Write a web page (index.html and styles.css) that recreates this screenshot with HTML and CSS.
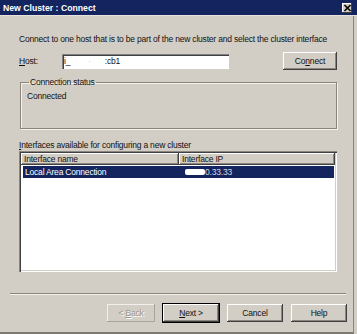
FILE: index.html
```html
<!DOCTYPE html>
<html lang="en">
<head>
    <meta charset="UTF-8">
    <title>New Cluster : Connect</title>
    <link rel="stylesheet" href="styles.css">
</head>
<body>
    <div class="titlebar">
        <span class="title">New Cluster : Connect</span>
        <span class="close">
            <svg width="9" height="8" viewBox="0 0 9 8"><path d="M1.5 1 L7.5 7 M7.5 1 L1.5 7" stroke="#000" stroke-width="1.6"/></svg>
        </span>
    </div>
    <div class="window">
        <div class="content">
            <p class="intro">Connect to one host that is to be part of the new cluster and select the cluster interface</p>

            <div class="host-row">
                <span class="host-label"><u>H</u>ost:</span>
                <div class="textbox"><span>i_</span><span class="hidden-part">·</span><span class="host-end">:cb1</span></div>
                <button class="btn btn-connect">Co<u>n</u>nect</button>
            </div>

            <fieldset class="group">
                <legend>Connection status</legend>
                <div class="status">Connected</div>
            </fieldset>

            <div class="list-label"><u>I</u>nterfaces available for configuring a new cluster</div>
            <div class="listview">
                <div class="list-header">
                    <div class="col col-name">Interface name</div>
                    <div class="col col-ip">Interface IP</div>
                </div>
                <div class="list-row selected">
                    <div class="cell cell-name">Local Area Connection</div>
                    <div class="cell cell-ip"><span class="smudge"></span>0.33.33</div>
                </div>
            </div>
        </div>

        <div class="separator"></div>

        <div class="footer">
            <button class="btn btn-back" disabled>&lt; <u>B</u>ack</button>
            <button class="btn btn-default"><u>N</u>ext &gt;</button>
            <button class="btn">Cancel</button>
            <button class="btn">Help</button>
        </div>
    </div>
</body>
</html>
```

FILE: styles.css
```css
body { margin: 0; background: #d2cec6; font-family: "Liberation Sans", Arial, sans-serif; font-size: 8.5px; letter-spacing: -0.2px; color: #111; width: 357px; height: 334px; overflow: hidden; }
u { text-decoration: underline; text-underline-offset: 1px; }

.titlebar { height: 16px; background: #13245f; display: flex; align-items: center; justify-content: space-between; padding: 0 5px 0 3px; box-sizing: border-box; border-bottom: 1px solid #e6e3dc; }
.title { color: #fff; font-weight: bold; font-size: 8.7px; letter-spacing: 0; }
.close { width: 10px; height: 10px; background: #d2cec6; display: flex; align-items: center; justify-content: center; box-shadow: inset -1px -1px 0 #404040, inset 1px 1px 0 #fff; }

.window { width: 354px; height: 318px; box-sizing: border-box; border-right: 1px solid #8a867e; border-bottom: 2px solid #7e7a72; display: flex; flex-direction: column; }
.content { padding: 0 16px 0 19px; }

.intro { margin: 18px 0 0; line-height: 10px; }

.host-row { display: flex; align-items: center; margin-top: 8px; height: 18px; }
.host-label { width: 43px; }
.textbox { width: 167px; height: 15px; box-sizing: border-box; background: #fff; display: flex; align-items: center; padding-left: 2px; box-shadow: inset 1px 1px 0 #808080, inset 2px 2px 0 #404040, inset -1px -1px 0 #fff; }
.hidden-part { color: #c8c8c8; margin-left: 18px; }
.host-end { margin-left: 14px; }

.btn { font-family: inherit; font-size: inherit; letter-spacing: inherit; color: #111; background: #d2cec6; border: 0; padding: 0; height: 18px; width: 56px; box-shadow: inset -1px -1px 0 #404040, inset 1px 1px 0 #fff, inset -2px -2px 0 #8a867e; }
.btn-connect { margin-left: auto; width: 54px; }
.btn-default { box-shadow: 0 0 0 1px #000, inset -1px -1px 0 #404040, inset 1px 1px 0 #fff, inset -2px -2px 0 #8a867e; }
.btn-back { color: #9a968e; text-shadow: 1px 1px 0 #fff; width: 48px; box-shadow: inset -1px -1px 0 #a8a49c, inset 1px 1px 0 #f2f0ea; }

.group { margin: 7px 0 0 1px; padding: 3px 6px 0; height: 47px; border: 1px solid #8a867e; box-shadow: 1px 1px 0 #f4f2ec, inset 1px 1px 0 #f4f2ec; }
.group legend { padding: 0 1px; margin-left: 2px; line-height: 10px; }
.status { line-height: 12px; }

.list-label { margin-top: 11px; line-height: 10px; }
.listview { margin-top: 1px; height: 121px; background: #fff; box-sizing: border-box; padding: 2px; box-shadow: inset 1px 1px 0 #8a867e, inset 2px 2px 0 #404040, inset -1px -1px 0 #fff, inset -2px -2px 0 #d2cec6; }
.list-header { display: flex; height: 12px; }
.col { background: #d2cec6; line-height: 12px; padding-left: 3px; box-sizing: border-box; box-shadow: inset -1px -1px 0 #404040, inset 1px 1px 0 #fff, inset -2px -2px 0 #8a867e; }
.col-name { width: 158px; }
.col-ip { flex: 1; }
.list-row { display: flex; height: 12px; margin: 1px 1px 0 2px; line-height: 12px; }
.list-row.selected { background: #14245e; color: #fff; }
.cell-name { width: 158px; padding-left: 2px; box-sizing: border-box; }
.cell-ip { display: flex; align-items: center; padding-left: 4px; color: #d8dbe6; }
.smudge { width: 20px; height: 6px; background: #fff; border-radius: 2px; }

.separator { margin: 21px 7px 0 10px; height: 0; border-top: 1px solid #8a867e; border-bottom: 1px solid #f4f2ec; }

.footer { display: flex; justify-content: flex-end; gap: 8px; margin-top: 9px; padding-right: 6px; }
```
